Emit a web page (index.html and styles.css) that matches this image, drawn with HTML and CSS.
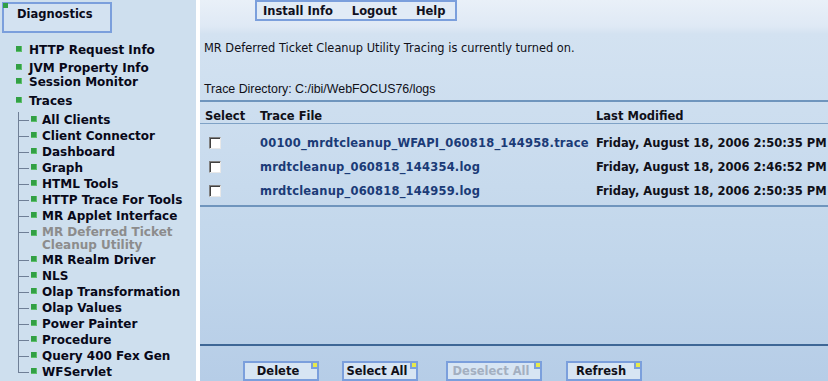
FILE: index.html
```html
<!DOCTYPE html>
<html lang="en">
<head>
    <meta charset="UTF-8">
    <title>Diagnostics - Traces</title>
    <link rel="stylesheet" href="styles.css">
</head>
<body>
    <div class="sidebar">
        <div class="side-title"><span class="corner"></span>Diagnostics</div>
        <ul class="menu">
            <li class="first"><span class="bullet"></span>HTTP Request Info</li>
            <li class="jvm"><span class="bullet"></span>JVM Property Info</li>
            <li class="session"><span class="bullet"></span>Session Monitor</li>
            <li class="traces"><span class="bullet"></span>Traces
                <ul class="tree">
                    <li><span class="bullet"></span>All Clients</li>
                    <li><span class="bullet"></span>Client Connector</li>
                    <li><span class="bullet"></span>Dashboard</li>
                    <li><span class="bullet"></span>Graph</li>
                    <li><span class="bullet"></span>HTML Tools</li>
                    <li><span class="bullet"></span>HTTP Trace For Tools</li>
                    <li><span class="bullet"></span>MR Applet Interface</li>
                    <li class="current"><span class="bullet"></span><span class="label">MR Deferred Ticket<br>Cleanup Utility</span></li>
                    <li><span class="bullet"></span>MR Realm Driver</li>
                    <li><span class="bullet"></span>NLS</li>
                    <li><span class="bullet"></span>Olap Transformation</li>
                    <li><span class="bullet"></span>Olap Values</li>
                    <li><span class="bullet"></span>Power Painter</li>
                    <li><span class="bullet"></span>Procedure</li>
                    <li><span class="bullet"></span>Query 400 Fex Gen</li>
                    <li><span class="bullet"></span>WFServlet</li>
                </ul>
            </li>
        </ul>
    </div>

    <div class="main">
        <div class="topnav">
            <a href="#">Install Info</a>
            <a href="#">Logout</a>
            <a href="#">Help</a>
        </div>

        <p class="status">MR Deferred Ticket Cleanup Utility Tracing is currently turned on.</p>
        <p class="trace-dir">Trace Directory: C:/ibi/WebFOCUS76/logs</p>

        <table class="files">
            <thead>
                <tr>
                    <th class="col-select">Select</th>
                    <th class="col-file">Trace File</th>
                    <th class="col-date">Last Modified</th>
                </tr>
            </thead>
            <tbody>
                <tr>
                    <td class="col-select"><input type="checkbox"></td>
                    <td class="col-file"><a href="#">00100_mrdtcleanup_WFAPI_060818_144958.trace</a></td>
                    <td class="col-date">Friday, August 18, 2006 2:50:35 PM</td>
                </tr>
                <tr>
                    <td class="col-select"><input type="checkbox"></td>
                    <td class="col-file"><a href="#">mrdtcleanup_060818_144354.log</a></td>
                    <td class="col-date">Friday, August 18, 2006 2:46:52 PM</td>
                </tr>
                <tr>
                    <td class="col-select"><input type="checkbox"></td>
                    <td class="col-file"><a href="#">mrdtcleanup_060818_144959.log</a></td>
                    <td class="col-date">Friday, August 18, 2006 2:50:35 PM</td>
                </tr>
            </tbody>
        </table>

        <div class="actions">
            <button class="btn btn-delete">Delete</button>
            <button class="btn btn-select">Select All</button>
            <button class="btn btn-deselect" disabled>Deselect All</button>
            <button class="btn btn-refresh">Refresh</button>
        </div>
    </div>
</body>
</html>
```

FILE: styles.css
```css
body {
    margin: 0;
    height: 100vh;
    display: flex;
    background-color: #fff;
    font-family: "DejaVu Sans", Verdana, sans-serif;
    overflow: hidden;
}
.sidebar {
    width: 196px;
    background-color: #cedfee;
    padding: 2px 0 0 2px;
    box-sizing: border-box;
}
.side-title {
    width: 110px;
    height: 31px;
    box-sizing: border-box;
    border: 2px solid #7b9fdc;
    background-color: #d3e2f1;
    padding: 3px 0 0 13px;
    font-size: 11.5px;
    font-weight: bold;
    color: #0a0a1a;
}
.side-title .corner {
    display: block;
    float: left;
    width: 5px;
    height: 5px;
    margin: -4px 0 0 -14px;
    background-color: #32a045;
}
.menu,
.menu ul {
    list-style: none;
    margin: 0;
    padding: 0;
}
.menu {
    padding-left: 14px;
}
.menu li {
    font-size: 12px;
    font-weight: bold;
    line-height: 16px;
    color: #080818;
}
.menu .first {
    margin-top: 9px;
}
.menu .jvm {
    margin-top: 2px;
}
.menu .session {
    margin-top: -2px;
}
.menu .traces {
    margin-top: 3px;
}
.bullet {
    display: inline-block;
    width: 6px;
    height: 6px;
    margin: 0 7px 2px 0;
    background-color: #32a045;
    box-shadow: inset -1px -1px 0 #5cbf6a;
}
.menu .tree {
    margin: 3px 0 0 2px;
}
.tree li {
    padding-left: 13px;
    background:
        linear-gradient(#6f7f96, #6f7f96) 0 0 / 1px 100% no-repeat,
        linear-gradient(#6f7f96, #6f7f96) 0 8px / 11px 1px no-repeat;
}
.tree li:last-child {
    background:
        linear-gradient(#6f7f96, #6f7f96) 0 0 / 1px 9px no-repeat,
        linear-gradient(#6f7f96, #6f7f96) 0 8px / 11px 1px no-repeat;
}
.tree li .bullet {
    margin-right: 5px;
}
.tree .current {
    color: #8c8c8c;
    line-height: 13px;
    padding: 2px 0 0 13px;
}
.tree .current .label {
    display: inline-block;
    vertical-align: top;
}
.tree .current .bullet {
    vertical-align: top;
    margin-top: 4px;
}

.main {
    flex: 1;
    margin-left: 4px;
    display: flex;
    flex-direction: column;
    background: linear-gradient(180deg, #e9f0f8 0px, #dfe9f5 26px, #d3e2f1 34px, #cadcee 150px, #c1d6eb 260px, #b6cde7 381px);
    font-size: 11px;
    color: #101018;
}
.topnav {
    align-self: flex-start;
    margin: 0 0 0 55px;
    width: 202px;
    height: 21px;
    box-sizing: border-box;
    border: 2px solid #7b9fdc;
    background-color: #e1ebf6;
    padding: 2px 0 0 6px;
    display: flex;
    gap: 19px;
}
.topnav a {
    font-size: 11.5px;
    font-weight: bold;
    color: #101020;
    text-decoration: none;
}
.status {
    margin: 20px 0 0 4px;
    font-size: 11.4px;
}
.trace-dir {
    margin: 27px 0 0 4px;
    font-family: "Liberation Sans", Arial, sans-serif;
    font-size: 12.4px;
}
.files {
    margin-top: 4px;
    width: 100%;
    table-layout: fixed;
    border-collapse: collapse;
    border-top: 2px solid #6f95bd;
    border-bottom: 2px solid #6f95bd;
}
.files th {
    text-align: left;
    vertical-align: top;
    font-size: 11.5px;
    font-weight: bold;
    line-height: 14px;
    height: 22px;
    padding: 7px 0 0 5px;
    box-sizing: border-box;
    border-bottom: 1px solid #7fa2c6;
}
.files td {
    vertical-align: top;
    font-size: 11.5px;
    font-weight: bold;
    line-height: 14px;
    height: 24px;
    box-sizing: border-box;
    padding: 6px 0 0 5px;
    white-space: nowrap;
}
.files tbody tr:first-child td {
    height: 30px;
    padding-top: 12px;
}
.files tbody tr:last-child td {
    height: 28px;
}
.files .col-select {
    width: 55px;
}
.files td.col-select {
    padding-left: 9px;
}
.files .col-file {
    width: 336px;
}
.files td.col-file {
    letter-spacing: 0.2px;
}
.files td input {
    appearance: none;
    display: block;
    margin: 1px 0 0 0;
    width: 12px;
    height: 12px;
    background-color: #fff;
    border: 1px solid;
    border-color: #808080 #e8e8e8 #e8e8e8 #808080;
    box-shadow: inset 1px 1px 0 #404040;
}
.files a {
    color: #1b3b77;
    text-decoration: none;
}
.actions {
    margin-top: auto;
    border-top: 2px solid #3e6796;
    height: 37px;
    box-sizing: border-box;
    padding: 15px 0 0 43px;
    display: flex;
}
.btn {
    position: relative;
    width: 76px;
    height: 20px;
    box-sizing: border-box;
    border: 2px solid #7b9fdc;
    background-color: #d7e5f3;
    font-family: "DejaVu Sans", Verdana, sans-serif;
    font-size: 11.5px;
    font-weight: bold;
    color: #101018;
    padding: 0 6px 0 0;
    cursor: pointer;
}
.btn::after {
    content: "";
    position: absolute;
    top: 0;
    right: 0;
    width: 4px;
    height: 4px;
    background-color: #e7e94a;
    border-left: 2px solid #7b9fdc;
    border-bottom: 2px solid #7b9fdc;
}
.btn-select { margin-left: 23px; }
.btn-deselect { margin-left: 28px; width: 96px; color: #a3afc0; }
.btn-refresh { margin-left: 24px; }
```
